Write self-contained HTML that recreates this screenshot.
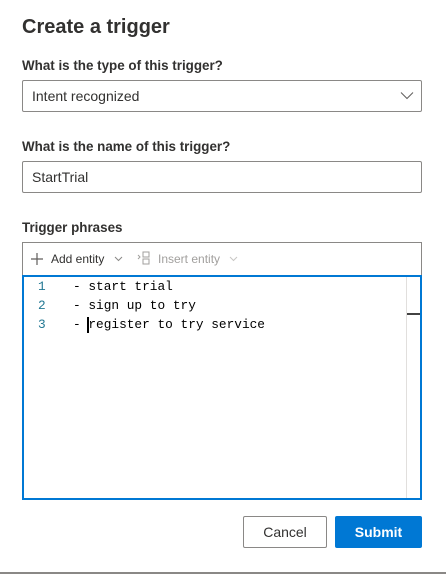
<!DOCTYPE html>
<html><head><style>
*{margin:0;padding:0;box-sizing:border-box}
body{width:446px;height:574px;background:#fff;position:relative;overflow:hidden;font-family:"Liberation Sans",sans-serif;color:#323130}
.a{position:absolute}
.lbl{font-size:13.4px;font-weight:bold;color:#323130;left:22px}
.box{left:22px;width:400px;height:32px;border:1px solid #8a8886;border-radius:2px;font-size:14px;padding:7px 0 0 9px}
.mono{font-family:"Liberation Mono",monospace;font-size:12.8px;color:#000}
.ln{color:#237893;font-family:"Liberation Mono",monospace;font-size:12.8px}
</style></head><body>
<div class="a" style="left:22px;top:16px;font-size:20px;font-weight:bold;color:#323130">Create a trigger</div>
<div class="a lbl" style="top:58px">What is the type of this trigger?</div>
<div class="a box" style="top:80px">Intent recognized</div>
<svg class="a" style="left:400px;top:91px" width="14" height="9"><path d="M1 1.5L7 7.5L13 1.5" fill="none" stroke="#605e5c" stroke-width="1"/></svg>
<div class="a lbl" style="top:139px">What is the name of this trigger?</div>
<div class="a box" style="top:161px">StartTrial</div>
<div class="a lbl" style="top:220px">Trigger phrases</div>
<div class="a" style="left:22px;top:242px;width:400px;height:34px;border:1px solid #8a8886;border-bottom:none"></div>
<svg class="a" style="left:30px;top:252px" width="14" height="14"><path d="M7 1V13M1 7H13" stroke="#605e5c" stroke-width="1.2"/></svg>
<div class="a" style="left:51px;top:252px;font-size:12px;color:#323130">Add entity</div>
<svg class="a" style="left:114px;top:256px" width="9" height="6"><path d="M1 1L4.5 4.5L8 1" fill="none" stroke="#8a8886"/></svg>
<svg class="a" style="left:137px;top:251px" width="14" height="14"><path d="M1 4L3 6L1 8M6 1H12V6H6ZM6 8H12V13H6Z" fill="none" stroke="#a19f9d"/></svg>
<div class="a" style="left:158px;top:252px;font-size:12px;color:#a19f9d">Insert entity</div>
<svg class="a" style="left:229px;top:256px" width="9" height="6"><path d="M1 1L4.5 4.5L8 1" fill="none" stroke="#c8c6c4"/></svg>
<div class="a" style="left:22px;top:275px;width:400px;height:225px;border:2px solid #0078d4"></div>
<div class="a" style="left:406px;top:277px;width:1px;height:221px;background:#e1dfdd"></div>
<div class="a" style="left:407px;top:313px;width:13px;height:2px;background:#424242"></div>
<div class="a ln" style="left:38px;top:277px;line-height:19px">1<br>2<br>3</div>
<div class="a mono" style="left:73px;top:277px;line-height:19px;white-space:pre">- start trial
- sign up to try
- register to try service</div>
<div class="a" style="left:87px;top:317px;width:2px;height:16px;background:#000"></div>
<div class="a" style="left:243px;top:516px;width:84px;height:32px;border:1px solid #8a8886;border-radius:2px;font-size:14px;text-align:center;line-height:30px">Cancel</div>
<div class="a" style="left:335px;top:516px;width:87px;height:32px;background:#0078d4;border-radius:2px;font-size:14px;font-weight:bold;color:#fff;text-align:center;line-height:32px">Submit</div>
<div class="a" style="left:0;top:572px;width:446px;height:2px;background:#8a8886"></div>
</body></html>
